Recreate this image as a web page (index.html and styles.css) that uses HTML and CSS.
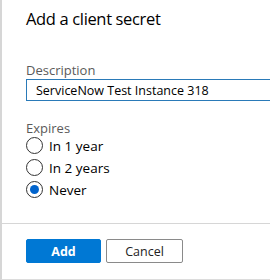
FILE: index.html
```html
<!DOCTYPE html>
<html lang="en">
<head>
    <meta charset="UTF-8">
    <meta name="viewport" content="width=device-width, initial-scale=1.0">
    <title>Add a client secret</title>
    <link rel="stylesheet" href="styles.css">
</head>
<body>
    <div class="panel">
        <div class="content">
            <h1 class="title">Add a client secret</h1>
            <label class="field-label" for="desc">Description</label>
            <input class="text-input" id="desc" type="text" value="ServiceNow Test Instance 318">
            <div class="field-label expires">Expires</div>
            <div class="radios">
                <label class="radio"><span class="circle"></span>In 1 year</label>
                <label class="radio"><span class="circle"></span>In 2 years</label>
                <label class="radio"><span class="circle checked"></span>Never</label>
            </div>
        </div>
        <div class="footer">
            <button class="btn primary">Add</button>
            <button class="btn">Cancel</button>
        </div>
    </div>
</body>
</html>
```

FILE: styles.css
```css
* {
    box-sizing: border-box;
}

body {
    margin: 0;
    background: #fff;
    font-family: "Open Sans", "Noto Sans", sans-serif;
    color: #000;
}

.panel {
    width: 270px;
    height: 280px;
    border-left: 2px solid #d6d6d6;
    border-bottom: 1px solid #dcdcdc;
    display: flex;
    flex-direction: column;
    overflow: hidden;
}

.content {
    padding: 8px 0 0 24px;
    height: 224px;
    border-bottom: 1px solid #d6d6d6;
    display: flex;
    flex-direction: column;
}

.title {
    margin: 0;
    font-size: 16.5px;
    font-weight: 400;
    letter-spacing: -0.35px;
    line-height: 22px;
}

.field-label {
    font-size: 13px;
    color: #5a5a5a;
    line-height: 18px;
    margin-top: 31px;
}

.text-input {
    width: 260px;
    height: 22px;
    flex-shrink: 0;
    border: 1px solid #2a7ab8;
    padding: 0 9px;
    font: 12.5px "Open Sans", sans-serif;
    color: #000;
    outline: none;
}

.expires {
    margin-top: 18px;
}

.radios {
    display: flex;
    flex-direction: column;
    gap: 5px;
}

.radio {
    display: flex;
    align-items: center;
    gap: 6px;
    font-size: 13.5px;
    line-height: 16px;
}

.circle {
    width: 17px;
    height: 17px;
    border: 1px solid #333;
    border-radius: 50%;
    position: relative;
}

.circle.checked::after {
    content: "";
    position: absolute;
    left: 3px;
    top: 3px;
    width: 9px;
    height: 9px;
    border-radius: 50%;
    background: #0063cc;
}

.footer {
    display: flex;
    gap: 5px;
    padding: 15px 0 0 24px;
}

.btn {
    width: 77px;
    height: 24px;
    border: 1px solid #8a8a8a;
    border-radius: 2px;
    background: #fff;
    font: 12.5px "Open Sans", sans-serif;
    color: #222;
    padding: 0;
}

.btn.primary {
    width: 75px;
    border-color: #0078d4;
    background: #0078d4;
    color: #fff;
    font-weight: 700;
}
```
